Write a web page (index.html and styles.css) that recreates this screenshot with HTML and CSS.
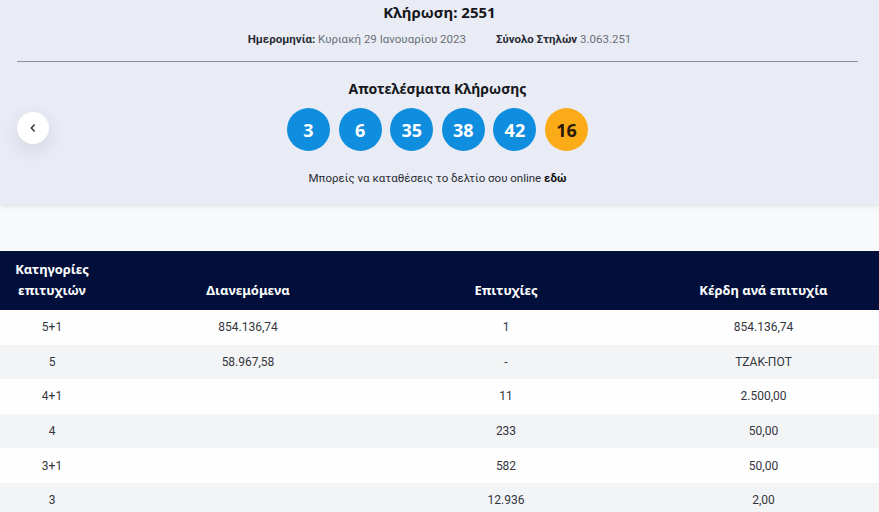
FILE: index.html
```html
<!DOCTYPE html>
<html lang="el">
<head>
<meta charset="utf-8">
<link rel="stylesheet" href="styles.css">
</head>
<body>
<section class="draw">
  <h1 class="title">Κλήρωση: 2551</h1>
  <div class="meta">
    <span><b>Ημερομηνία:</b> Κυριακή 29 Ιανουαρίου 2023</span>
    <span><b>Σύνολο Στηλών</b> 3.063.251</span>
  </div>
  <hr class="divider">
  <div class="results">
    <div class="side">
      <button class="nav-btn" aria-label="Προηγούμενη">
        <svg width="10" height="10" viewBox="0 0 10 10"><path d="M6.2 2 3.3 5l2.9 3" fill="none" stroke="#2b2f3a" stroke-width="1.4" stroke-linecap="round" stroke-linejoin="round"/></svg>
      </button>
    </div>
    <div class="center">
      <h2 class="results-title">Αποτελέσματα Κλήρωσης</h2>
      <div class="balls">
        <span class="ball">3</span>
        <span class="ball">6</span>
        <span class="ball">35</span>
        <span class="ball">38</span>
        <span class="ball">42</span>
        <span class="ball bonus">16</span>
      </div>
      <p class="online">Μπορείς να καταθέσεις το δελτίο σου online <b>εδώ</b></p>
    </div>
    <div class="side"></div>
  </div>
</section>

<div class="table">
  <div class="row head">
    <div class="c1">Κατηγορίες<br>επιτυχιών</div>
    <div class="c2">Διανεμόμενα</div>
    <div class="c3">Επιτυχίες</div>
    <div class="c4">Κέρδη ανά επιτυχία</div>
  </div>
  <div class="row"><div class="c1">5+1</div><div class="c2">854.136,74</div><div class="c3">1</div><div class="c4">854.136,74</div></div>
  <div class="row alt"><div class="c1">5</div><div class="c2">58.967,58</div><div class="c3">-</div><div class="c4">ΤΖΑΚ-ΠΟΤ</div></div>
  <div class="row"><div class="c1">4+1</div><div class="c2"></div><div class="c3">11</div><div class="c4">2.500,00</div></div>
  <div class="row alt"><div class="c1">4</div><div class="c2"></div><div class="c3">233</div><div class="c4">50,00</div></div>
  <div class="row"><div class="c1">3+1</div><div class="c2"></div><div class="c3">582</div><div class="c4">50,00</div></div>
  <div class="row alt"><div class="c1">3</div><div class="c2"></div><div class="c3">12.936</div><div class="c4">2,00</div></div>
</div>
</body>
</html>
```
FILE: styles.css
```css
* { box-sizing: border-box; }
html, body { margin: 0; padding: 0; }
body {
  background: #f8f9fb;
  font-family: "Noto Sans", "Open Sans", sans-serif;
  color: #2a2d35;
  width: 879px;
  overflow: hidden;
}
.draw {
  background: #e9ecf4;
  padding: 2px 0 18px;
  box-shadow: 0 2px 5px rgba(0,0,0,0.10);
  position: relative;
  text-align: center;
}
.title {
  margin: 0;
  font-size: 15px;
  line-height: 20px;
  font-weight: 700;
  color: #15171c;
}
.meta {
  margin-top: 9px;
  display: flex;
  justify-content: center;
  gap: 30px;
  font-family: Roboto, "Noto Sans", sans-serif;
  font-size: 11.5px;
  line-height: 16px;
  color: #6b6f78;
}
.meta b { color: #2a2d35; font-weight: 700; }
.divider {
  margin: 14px 21px 0 17px;
  border: 0;
  height: 1px;
  background: #8d9199;
}
.results {
  display: grid;
  grid-template-columns: 120px 1fr 124px;
  align-items: center;
}
.side { display: flex; padding-left: 17px; }
.nav-btn {
  width: 32px;
  height: 32px;
  border-radius: 50%;
  border: 0;
  background: #fff;
  box-shadow: 0 6px 18px rgba(40,50,80,0.12);
  display: flex;
  align-items: center;
  justify-content: center;
  padding: 0;
  margin-top: 7px;
}
.center { display: flex; flex-direction: column; align-items: center; }
.results-title {
  margin: 17px 0 0;
  font-size: 14px;
  line-height: 20px;
  font-weight: 700;
  color: #15171c;
}
.balls {
  margin-top: 9px;
  display: flex;
  gap: 8.6px;
}
.ball {
  width: 43px;
  height: 43px;
  border-radius: 50%;
  background: #0f8ee0;
  color: #fff;
  font-weight: 700;
  font-size: 18px;
  display: flex;
  align-items: center;
  justify-content: center;
}
.ball.bonus { background: #fbab18; color: #2b1a08; }
.online {
  margin: 19px 0 0;
  font-family: Roboto, "Noto Sans", sans-serif;
  font-size: 11.5px;
  line-height: 16px;
  color: #2a2d35;
}
.online b { color: #111; }

.table { margin-top: 47px; }
.row {
  display: grid;
  grid-template-columns: 104px 288px 228px 259px;
  height: 34.6px;
  align-items: center;
  text-align: center;
  font-family: Roboto, "Noto Sans", sans-serif;
  font-size: 12px;
  color: #33363d;
  background: #fefefe;
}
.row.alt { background: #f3f4f6; }
.row .c4 { padding-left: 28px; }
.row.head {
  height: 59px;
  background: #010f3a;
  color: #fff;
  font-family: "Noto Sans", "Open Sans", sans-serif;
  font-weight: 700;
  font-size: 13px;
  line-height: 21px;
  align-items: end;
  padding-bottom: 9px;
}
```
